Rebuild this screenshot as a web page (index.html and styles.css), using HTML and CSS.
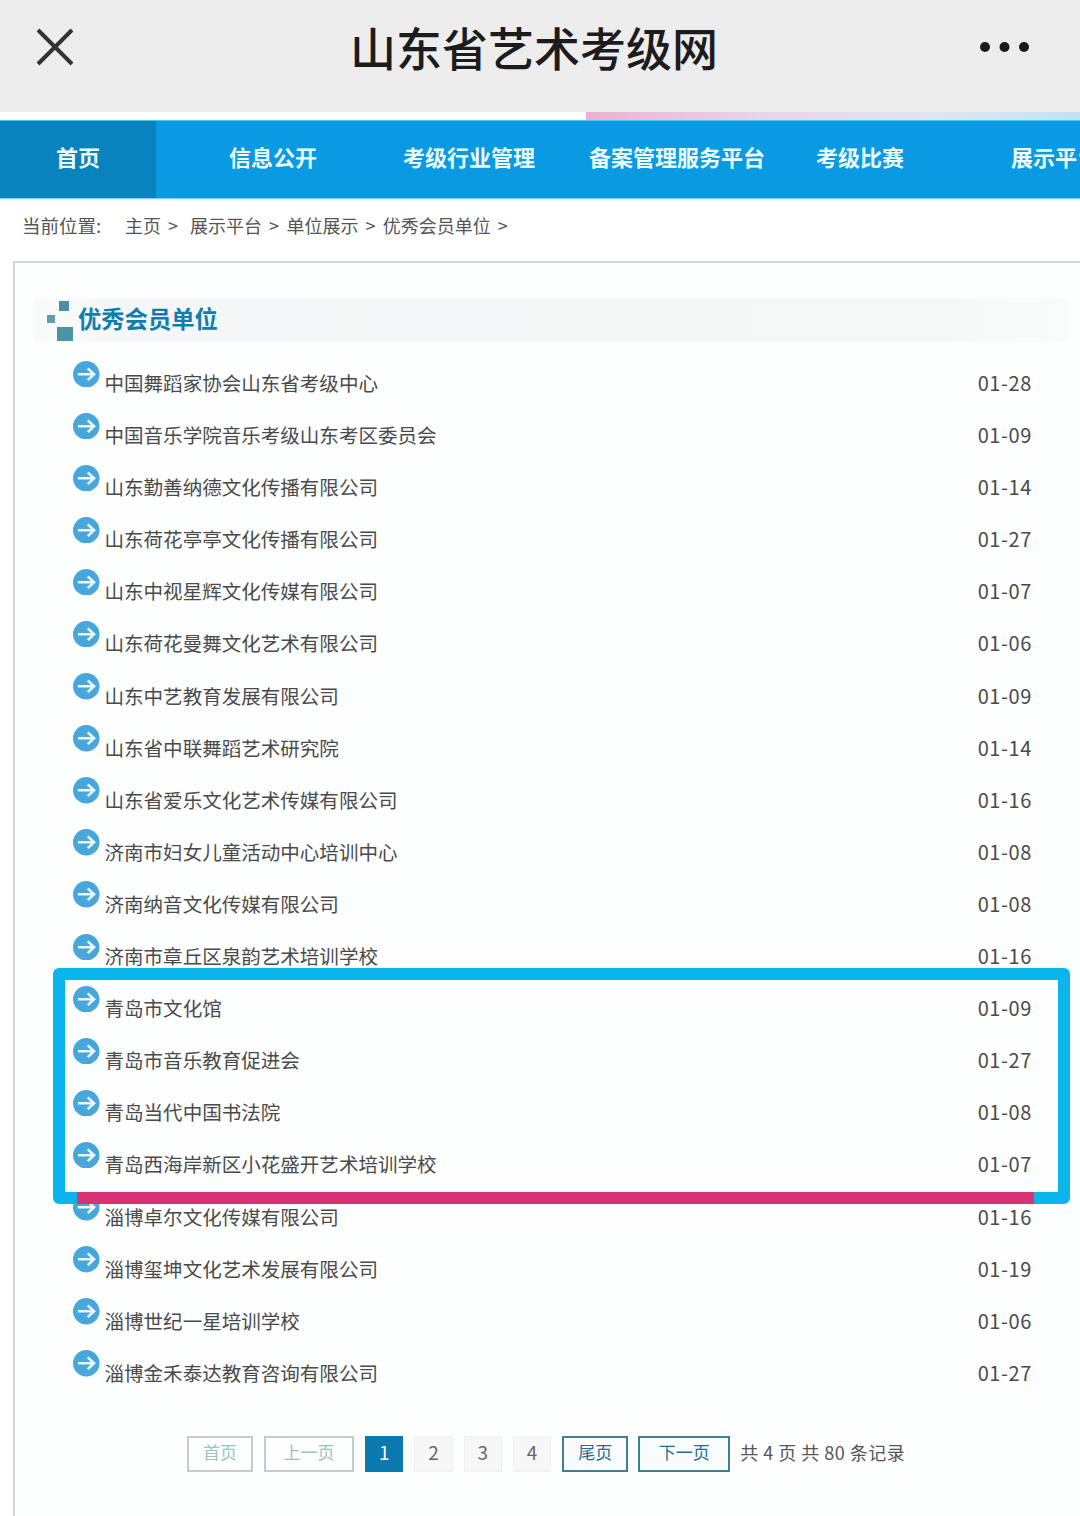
FILE: index.html
```html
<!DOCTYPE html>
<html lang="zh-CN">
<head>
    <meta charset="UTF-8">
    <meta name="viewport" content="width=device-width, initial-scale=1.0">
    <title>山东省艺术考级网</title>
    <link rel="stylesheet" href="styles.css">
</head>
<body>
    <header class="topbar">
        <svg class="close" width="38" height="38" viewBox="0 0 38 38"><path d="M2 2 L36 36 M36 2 L2 36" stroke="#333" stroke-width="4" fill="none"/></svg>
        <div class="app-title">山东省艺术考级网</div>
        <svg class="more" width="50" height="10" viewBox="0 0 50 10"><circle cx="5" cy="5" r="5" fill="#1a1a1a"/><circle cx="24.500" cy="5" r="5" fill="#1a1a1a"/><circle cx="44" cy="5" r="5" fill="#1a1a1a"/></svg>
    </header>
    <div class="strip"></div>

    <nav class="nav">
        <a class="active" href="#">首页</a>
        <a href="#">信息公开</a>
        <a href="#">考级行业管理</a>
        <a href="#">备案管理服务平台</a>
        <a href="#">考级比赛</a>
        <a href="#">展示平台</a>
    </nav>

    <div class="crumbs">
        <span class="crumbs-label">当前位置:</span>
        <span class="crumb crumb-home">主页 <i>&gt;</i></span>
        <span class="crumb">展示平台 <i>&gt;</i></span>
        <span class="crumb">单位展示 <i>&gt;</i></span>
        <span class="crumb">优秀会员单位 <i>&gt;</i></span>
    </div>

    <section class="panel">
        <h2 class="panel-title">
            <svg width="26" height="40" viewBox="0 0 26 40"><rect x="0" y="14" width="8" height="8" fill="#5f9fb0"/><rect x="12" y="0" width="10" height="10" fill="#4b8fa3"/><rect x="10" y="26" width="16" height="14" fill="#4b93a6"/></svg>
            优秀会员单位
        </h2>

        <ul class="list" id="list"></ul>

        <div class="pager">
            <a class="pg pg-off pg-first" href="#">首页</a>
            <a class="pg pg-off pg-prev" href="#">上一页</a>
            <a class="pg pg-num pg-cur" href="#">1</a>
            <a class="pg pg-num" href="#">2</a>
            <a class="pg pg-num" href="#">3</a>
            <a class="pg pg-num" href="#">4</a>
            <a class="pg pg-on pg-first" href="#">尾页</a>
            <a class="pg pg-on pg-next" href="#">下一页</a>
            <span class="pg-info">共 4 页 共 80 条记录</span>
        </div>
    </section>

    <!-- hand drawn markup on top of the screenshot -->
    <div class="mark-box"></div>
    <div class="mark-line"></div>

    <script>
    const items = [
        ['中国舞蹈家协会山东省考级中心', '01-28'],
        ['中国音乐学院音乐考级山东考区委员会', '01-09'],
        ['山东勤善纳德文化传播有限公司', '01-14'],
        ['山东荷花亭亭文化传播有限公司', '01-27'],
        ['山东中视星辉文化传媒有限公司', '01-07'],
        ['山东荷花曼舞文化艺术有限公司', '01-06'],
        ['山东中艺教育发展有限公司', '01-09'],
        ['山东省中联舞蹈艺术研究院', '01-14'],
        ['山东省爱乐文化艺术传媒有限公司', '01-16'],
        ['济南市妇女儿童活动中心培训中心', '01-08'],
        ['济南纳音文化传媒有限公司', '01-08'],
        ['济南市章丘区泉韵艺术培训学校', '01-16'],
        ['青岛市文化馆', '01-09'],
        ['青岛市音乐教育促进会', '01-27'],
        ['青岛当代中国书法院', '01-08'],
        ['青岛西海岸新区小花盛开艺术培训学校', '01-07'],
        ['淄博卓尔文化传媒有限公司', '01-16'],
        ['淄博玺坤文化艺术发展有限公司', '01-19'],
        ['淄博世纪一星培训学校', '01-06'],
        ['淄博金禾泰达教育咨询有限公司', '01-27']
    ];
    const icon = '<svg class="row-icon" width="26.500" height="26.500" viewBox="0 0 27 27"><circle cx="13.500" cy="13.500" r="13.500" fill="#47a7dc"/><path d="M5 13.500 H21 M15 7.500 L21.500 13.500 L15 19.500" stroke="#eef7fc" stroke-width="2.600" fill="none"/></svg>';
    document.getElementById('list').innerHTML = items.map(item =>
        `<li class="row">${icon}<a class="row-name" href="#">${item[0]}</a><span class="row-date">${item[1]}</span></li>`
    ).join('');
    </script>
</body>
</html>
```

FILE: styles.css
```css
html, body { margin: 0; padding: 0; height: 1516px; overflow: hidden; }
body {
    position: relative;
    background: #fff;
    font-family: "Noto Sans CJK SC", "Noto Sans", sans-serif;
    color: #444;
}
a { color: inherit; text-decoration: none; }

/* app bar */
.topbar {
    height: 112px;
    box-sizing: border-box;
    padding: 0 50px 20px 36px;
    background: #ededee;
    display: flex;
    align-items: center;
}
.close { flex: none; margin-top: 2px; }
.more { flex: none; margin-top: 2px; }
.app-title {
    flex: 1;
    margin-left: 14px;
    text-align: center;
    font-size: 46px;
    font-weight: 500;
    line-height: 60px;
    color: #1c1c1c;
}
.strip {
    height: 8px;
    margin-left: 586px;
    background: linear-gradient(to right, #efb0cf, #e9d3e8 35%, #dfe6f2 70%, #bfe3f6);
}

/* nav */
.nav {
    height: 79px;
    background: #0a9ae3;
    display: flex;
    white-space: nowrap;
    overflow: hidden;
    border-top: 1px solid #4cc6f0;
    border-bottom: 1px solid #6fd6f7;
    box-sizing: border-box;
}
.nav a {
    flex: none;
    font-size: 22px;
    font-weight: 700;
    line-height: 70px;
    color: #ecfbfd;
}
.nav a.active { background: #0883bd; padding: 0 56px; height: 77px; }
.nav a:nth-child(2) { margin-left: 73px; }
.nav a:nth-child(3) { margin-left: 86px; }
.nav a:nth-child(4) { margin-left: 54px; }
.nav a:nth-child(5) { margin-left: 51px; }
.nav a:nth-child(6) { margin-left: 107px; }

/* breadcrumb */
.crumbs {
    height: 52px;
    padding: 0 0 0 22px;
    margin-bottom: 10px;
    display: flex;
    align-items: center;
    font-size: 18px;
    color: #555;
}
.crumbs-label { width: 103px; font-size: 18.500px; }
.crumb { margin-right: 7.300px; }
.crumb i { font-style: normal; margin-left: 3px; }
.crumb-home { margin-right: 12px; }

/* panel */
.panel {
    margin-left: 13px;
    height: 1255px;
    border-top: 2px solid #d8d8d8;
    border-left: 2px solid #d4d4d4;
    box-sizing: border-box;
    background: #fdfefe;
}
.panel-title {
    height: 44px;
    box-sizing: border-box;
    margin: 35px 12px 0 18px;
    padding: 0 0 4px 14px;
    display: flex;
    align-items: center;
    gap: 5px;
    font-size: 23.300px;
    font-weight: 700;
    color: #0f7dad;
    background: linear-gradient(to right, #fafbfb, #f5f6f7 10%, #f7f8f8 90%, #fafbfb);
}
.panel-title svg { margin-top: 6px; }
.list {
    list-style: none;
    margin: 16px 0 0;
    padding: 0 48px 0 58px;
}
.row {
    height: 52.100px;
    display: flex;
    font-size: 19.550px;
    line-height: 49px;
    color: #4a4a4a;
}
.row-icon { flex: none; margin: 2.500px 5px 0 0; }
.row-name { flex: 1; }
.row-date { font-size: 20px; letter-spacing: 0.600px; }

/* pager */
.pager {
    margin: 36px 0 0 172px;
    height: 36px;
    display: flex;
    align-items: center;
    font-size: 17px;
    color: #666;
}
.pg {
    box-sizing: border-box;
    height: 36px;
    line-height: 30px;
    text-align: center;
    margin-right: 11px;
    border: 1px solid #ddd;
}
.pg-first { width: 66px; }
.pg-prev { width: 90px; }
.pg-next { width: 92px; margin-right: 9px; }
.pg-num { width: 38.300px; background: #f7f7f7; border-color: #f0f0f0; font-size: 19px; }
.pg-off { border: 2px solid #c3cdd0; color: #9cc4bf; line-height: 28px; }
.pg-on { border: 2px solid #3f8093; color: #1f6f8f; background: #f9fcfd; line-height: 28px; margin-right: 10px; }
.pg-cur { background: #0a79ae; border-color: #0a79ae; color: #fff; }
.pg-info { font-size: 18px; color: #555; white-space: nowrap; letter-spacing: 0.500px; margin-top: -4px; }

/* annotation drawn over the page */
.mark-box {
    position: absolute;
    left: 53px;
    top: 968px;
    width: 1017px;
    height: 236px;
    box-sizing: border-box;
    border: 12px solid #0ab5ec;
    border-radius: 6px;
}
.mark-line {
    position: absolute;
    left: 77px;
    top: 1192px;
    width: 957px;
    height: 12px;
    background: #d93274;
}
```
